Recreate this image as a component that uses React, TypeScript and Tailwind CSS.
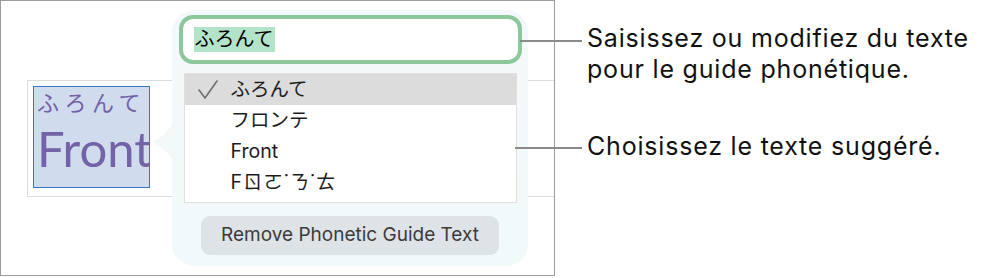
import React from 'react'

const font = { fontFamily: 'Inter, "Noto Sans CJK JP", sans-serif' }

const suggestions = ['ふろんて', 'フロンテ', 'Front', 'Fㄖㄛ˙ㄋ˙ㄊ']

function Check() {
  return (
    <svg width="20" height="19" viewBox="0 0 20 19" className="shrink-0">
      <polyline points="1,10 7,18 19,1" fill="none" stroke="#6f6f6f" strokeWidth="1.6" strokeLinecap="round" strokeLinejoin="round" />
    </svg>
  )
}

export default function App() {
  return (
    <div className="relative flex w-[991px] h-[278px] bg-white overflow-hidden" style={font}>
      {/* canvas */}
      <div className="relative w-[555px] h-[276px] shrink-0 border border-[#9d9d9d] pl-[26px] pt-[79px]">
        <div className="h-[117px] border border-r-0 border-[#dddddd] pl-[5px] pt-[5px]">
          <div className="w-[117px] h-[102px] border border-[#3a74c4] bg-[#d0dcee] pl-[3px] overflow-hidden text-[#7262a7]">
            <div className="text-[22px] leading-[30px] tracking-[5.5px] mt-[1px]">ふろんて</div>
            <div className="text-[49px] leading-[60px]" style={{ fontFamily: 'Lato, Inter, sans-serif' }}>Front</div>
          </div>
        </div>

        {/* popover */}
        <div className="absolute left-[171px] top-[9px] w-[356px] h-[256px] rounded-[22px] bg-gradient-to-b from-[#f5f8fa] to-[#f0fafa] flex flex-col items-center pt-[5px]">
          <svg className="absolute -left-[20px] top-[112px]" width="22" height="40" viewBox="0 0 22 40">
            <path d="M22 0 C 16 10, 8 16, 2 19 Q 0 20, 2 21 C 8 24, 16 30, 22 40 Z" fill="#f3f9f9" />
          </svg>
          <div className="w-[343px] h-[49px] border-[4px] border-[#8dc89c] rounded-[14px] bg-white flex items-center pl-[11px]">
            <span className="bg-[#b3e4c9] text-[20px] leading-[25px] text-black px-[1px]">ふろんて</span>
          </div>
          <div className="mt-[9px] w-[333px] h-[130px] border border-[#dfdfdf] bg-white">
            {suggestions.map((s, i) => (
              <div key={s} className={`h-[31px] flex items-center text-[19.5px] text-[#1c1c1c] ${i === 0 ? 'bg-[#dcdcdc]' : ''}`}>
                <div className="w-[46px] pl-[13px] flex items-center">{i === 0 && <Check />}</div>
                <span style={i === 3 ? { fontFamily: 'Inter, "Noto Sans CJK TC", sans-serif', letterSpacing: '1px' } : undefined}>{s}</span>
              </div>
            ))}
          </div>
          <button className="mt-[13px] w-[298px] h-[39px] rounded-[9px] bg-[#dde3e6] text-[19px] text-[#3b3b3b]">
            Remove Phonetic Guide Text
          </button>
        </div>
      </div>

      {/* leader lines */}
      <div className="absolute left-[520px] top-[40px] w-[62px] h-[2px] bg-[#8a8a8a]" />
      <div className="absolute left-[515px] top-[147px] w-[67px] h-[2px] bg-[#8a8a8a]" />

      {/* callouts */}
      <div className="flex flex-col pl-[32px] pt-[23px] text-[25px] leading-[31px] tracking-[0.8px] text-[#111111]">
        <p>Saisissez ou modifiez du texte<br />pour le guide phonétique.</p>
        <p className="mt-[46px]">Choisissez le texte suggéré.</p>
      </div>
    </div>
  )
}
